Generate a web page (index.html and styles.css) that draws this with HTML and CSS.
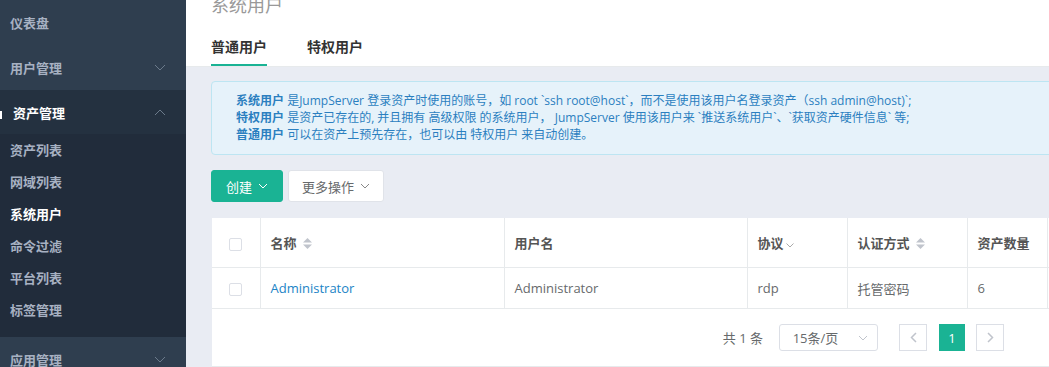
FILE: index.html
```html
<!DOCTYPE html>
<html lang="zh-CN">
<head>
    <meta charset="UTF-8">
    <meta name="viewport" content="width=device-width, initial-scale=1.0">
    <title>系统用户</title>
    <link rel="stylesheet" href="styles.css">
</head>
<body>
<div class="layout">
    <!-- left navigation -->
    <nav class="sidebar">
        <div class="menu-item">仪表盘</div>
        <div class="menu-item">用户管理
            <svg class="chev" width="12" height="7" viewBox="0 0 12 7"><polyline points="1,1 6,6 11,1" fill="none" stroke="#6b7a8b" stroke-width="1"/></svg>
        </div>
        <div class="menu-group">
            <div class="menu-item group-title"><span class="mark"></span>资产管理
                <svg class="chev" width="12" height="7" viewBox="0 0 12 7"><polyline points="1,6 6,1 11,6" fill="none" stroke="#6b7a8b" stroke-width="1"/></svg>
            </div>
            <div class="sub-item">资产列表</div>
            <div class="sub-item">网域列表</div>
            <div class="sub-item active">系统用户</div>
            <div class="sub-item">命令过滤</div>
            <div class="sub-item">平台列表</div>
            <div class="sub-item">标签管理</div>
        </div>
        <div class="menu-item">应用管理
            <svg class="chev" width="12" height="7" viewBox="0 0 12 7"><polyline points="1,1 6,6 11,1" fill="none" stroke="#6b7a8b" stroke-width="1"/></svg>
        </div>
    </nav>

    <main class="main">
        <div class="page-header">
            <h2 class="page-title">系统用户</h2>
            <div class="tabs">
                <div class="tab active">普通用户</div>
                <div class="tab">特权用户</div>
            </div>
        </div>

        <div class="content">
            <div class="callout">
                <p><b>系统用户</b> 是JumpServer 登录资产时使用的账号，如 root `ssh root@host`，而不是使用该用户名登录资产（ssh admin@host)`;</p>
                <p><b>特权用户</b> 是资产已存在的, 并且拥有 高级权限 的系统用户， JumpServer 使用该用户来 `推送系统用户`、`获取资产硬件信息` 等;</p>
                <p><b>普通用户</b> 可以在资产上预先存在，也可以由 特权用户 来自动创建。</p>
            </div>

            <div class="actions">
                <button class="btn btn-primary">创建
                    <svg width="10" height="6" viewBox="0 0 10 6"><polyline points="1,1 5,5 9,1" fill="none" stroke="#fff" stroke-width="1"/></svg>
                </button>
                <button class="btn btn-default">更多操作
                    <svg width="10" height="6" viewBox="0 0 10 6"><polyline points="1,1 5,5 9,1" fill="none" stroke="#888" stroke-width="1"/></svg>
                </button>
            </div>

            <div class="panel">
                <table class="list-table">
                    <colgroup>
                        <col style="width:48px">
                        <col style="width:244px">
                        <col style="width:243px">
                        <col style="width:100px">
                        <col style="width:120px">
                        <col style="width:80px">
                        <col>
                    </colgroup>
                    <thead>
                        <tr>
                            <th class="check-cell"><span class="checkbox"></span></th>
                            <th>名称 <svg class="sort" width="9" height="11" viewBox="0 0 9 11"><polygon points="4.5,0 9,4.5 0,4.5" fill="#c0c4cc"/><polygon points="0,6.5 9,6.5 4.5,11" fill="#c0c4cc"/></svg></th>
                            <th>用户名</th>
                            <th>协议<svg class="filter" width="8" height="5" viewBox="0 0 8 5"><polyline points="0.5,0.5 4,4 7.5,0.5" fill="none" stroke="#aaa" stroke-width="1"/></svg></th>
                            <th>认证方式 <svg class="sort" width="9" height="11" viewBox="0 0 9 11"><polygon points="4.5,0 9,4.5 0,4.5" fill="#c0c4cc"/><polygon points="0,6.5 9,6.5 4.5,11" fill="#c0c4cc"/></svg></th>
                            <th>资产数量</th>
                            <th></th>
                        </tr>
                    </thead>
                    <tbody>
                        <tr>
                            <td class="check-cell"><span class="checkbox"></span></td>
                            <td><a href="#" class="link">Administrator</a></td>
                            <td>Administrator</td>
                            <td>rdp</td>
                            <td>托管密码</td>
                            <td>6</td>
                            <td></td>
                        </tr>
                    </tbody>
                </table>
                <div class="pager">
                    <span class="total">共 1 条</span>
                    <div class="page-size">15条/页
                        <svg width="10" height="6" viewBox="0 0 10 6"><polyline points="1,1 5,5 9,1" fill="none" stroke="#c0c4cc" stroke-width="1"/></svg>
                    </div>
                    <div class="page-btn">
                        <svg width="7" height="11" viewBox="0 0 7 11"><polyline points="6,1 1.5,5.5 6,10" fill="none" stroke="#c0c4cc" stroke-width="1.5"/></svg>
                    </div>
                    <div class="page-num">1</div>
                    <div class="page-btn">
                        <svg width="7" height="11" viewBox="0 0 7 11"><polyline points="1,1 5.5,5.5 1,10" fill="none" stroke="#c0c4cc" stroke-width="1.5"/></svg>
                    </div>
                </div>
            </div>
        </div>
    </main>
</div>
</body>
</html>
```

FILE: styles.css
```css
body {
    margin: 0;
    padding: 0;
    font-family: "Open Sans", "Noto Sans CJK SC", sans-serif;
    font-size: 13px;
    color: #676a6c;
    background-color: #e9ecf3;
    overflow: hidden;
}
.layout {
    display: flex;
    height: 367px;
}
.sidebar {
    width: 186px;
    flex-shrink: 0;
    background-color: #2f3e4f;
    font-weight: 600;
    color: #a7b1c2;
}
.menu-item {
    height: 45px;
    display: flex;
    align-items: center;
    padding-left: 10px;
    padding-right: 20px;
    position: relative;
}
.menu-item .chev {
    margin-left: auto;
}
.menu-group {
    background-color: #212c3b;
    padding-bottom: 11px;
}
.group-title {
    height: 44px;
    padding-left: 13px;
    color: #fff;
    background-color: #243140;
}
.group-title .mark {
    position: absolute;
    left: 0;
    top: 21px;
    width: 2px;
    height: 8px;
    background-color: #fff;
}
.sub-item {
    height: 32px;
    line-height: 32px;
    padding-left: 10px;
}
.sub-item.active {
    color: #fff;
}

.main {
    flex: 1;
    overflow: hidden;
}
.page-header {
    display: flow-root;
    background-color: #fff;
    padding-left: 25px;
    border-bottom: 1px solid #e7eaec;
    height: 66px;
}
.page-title {
    margin: -7px 0 0 0;
    font-size: 18px;
    font-weight: 400;
    line-height: 24px;
    color: #999;
}
.tabs {
    display: flex;
    margin-top: 13px;
}
.tab {
    height: 34px;
    line-height: 34px;
    margin-right: 40px;
    font-size: 14px;
    font-weight: 600;
    color: #333;
    border-bottom: 2px solid transparent;
}
.tab.active {
    border-bottom-color: #1ab394;
}

.content {
    width: 1000px;
    padding: 14px 0 0 25px;
}
.callout {
    background-color: #e6f2fa;
    border: 1px solid #bde5f2;
    border-radius: 4px;
    padding: 10px 24px 11px;
    color: #2b7fc0;
    font-size: 12px;
    line-height: 17px;
}
.callout p {
    margin: 0;
    white-space: nowrap;
}
.actions {
    display: flex;
    gap: 5px;
    margin-top: 15px;
}
.btn {
    height: 32px;
    padding: 0 14px;
    font-family: inherit;
    font-size: 13px;
    border-radius: 3px;
    display: flex;
    align-items: center;
    gap: 6px;
    cursor: pointer;
}
.btn-primary {
    background-color: #1ab394;
    border: 1px solid #1ab394;
    color: #fff;
}
.btn-default {
    background-color: #fff;
    border: 1px solid #e0e3e9;
    color: #676a6c;
    padding: 0 13px;
}

.panel {
    margin-top: 16px;
    margin-left: 1px;
    background-color: #fff;
    border-bottom: 1px solid #e7eaec;
}
.list-table {
    width: 100%;
    border-collapse: collapse;
    table-layout: fixed;
}
.list-table th,
.list-table td {
    border: 1px solid #e7eaec;
    text-align: left;
    padding: 0 10px;
    white-space: nowrap;
    overflow: hidden;
}
.list-table th {
    height: 49px;
    font-weight: 600;
    color: #555;
}
.list-table td {
    height: 40px;
}
.list-table tr > :first-child {
    border-left: none;
}
.list-table thead th {
    border-top: none;
}
.check-cell {
    text-align: center !important;
}
.checkbox {
    display: inline-block;
    width: 11px;
    height: 11px;
    border: 1px solid #dcdfe6;
    border-radius: 2px;
    vertical-align: middle;
}
.sort {
    vertical-align: -1px;
    margin-left: 3px;
}
.filter {
    margin-left: 2px;
    vertical-align: 0;
}
.link {
    color: #1c84c6;
    text-decoration: none;
}

.pager {
    display: flex;
    align-items: center;
    justify-content: flex-end;
    padding-right: 207px;
    height: 57px;
}
.total {
    margin-right: 16px;
}
.page-size {
    box-sizing: border-box;
    width: 99px;
    height: 27px;
    border: 1px solid #dcdfe6;
    border-radius: 3px;
    display: flex;
    align-items: center;
    justify-content: center;
    gap: 20px;
    padding-left: 4px;
    margin-right: 21px;
}
.page-btn {
    width: 28px;
    height: 27px;
    box-sizing: border-box;
    border: 1px solid #dcdfe6;
    display: flex;
    align-items: center;
    justify-content: center;
}
.page-num {
    width: 26px;
    height: 27px;
    margin: 0 11px 0 12px;
    background-color: #1ab394;
    color: #fff;
    display: flex;
    align-items: center;
    justify-content: center;
}
```
